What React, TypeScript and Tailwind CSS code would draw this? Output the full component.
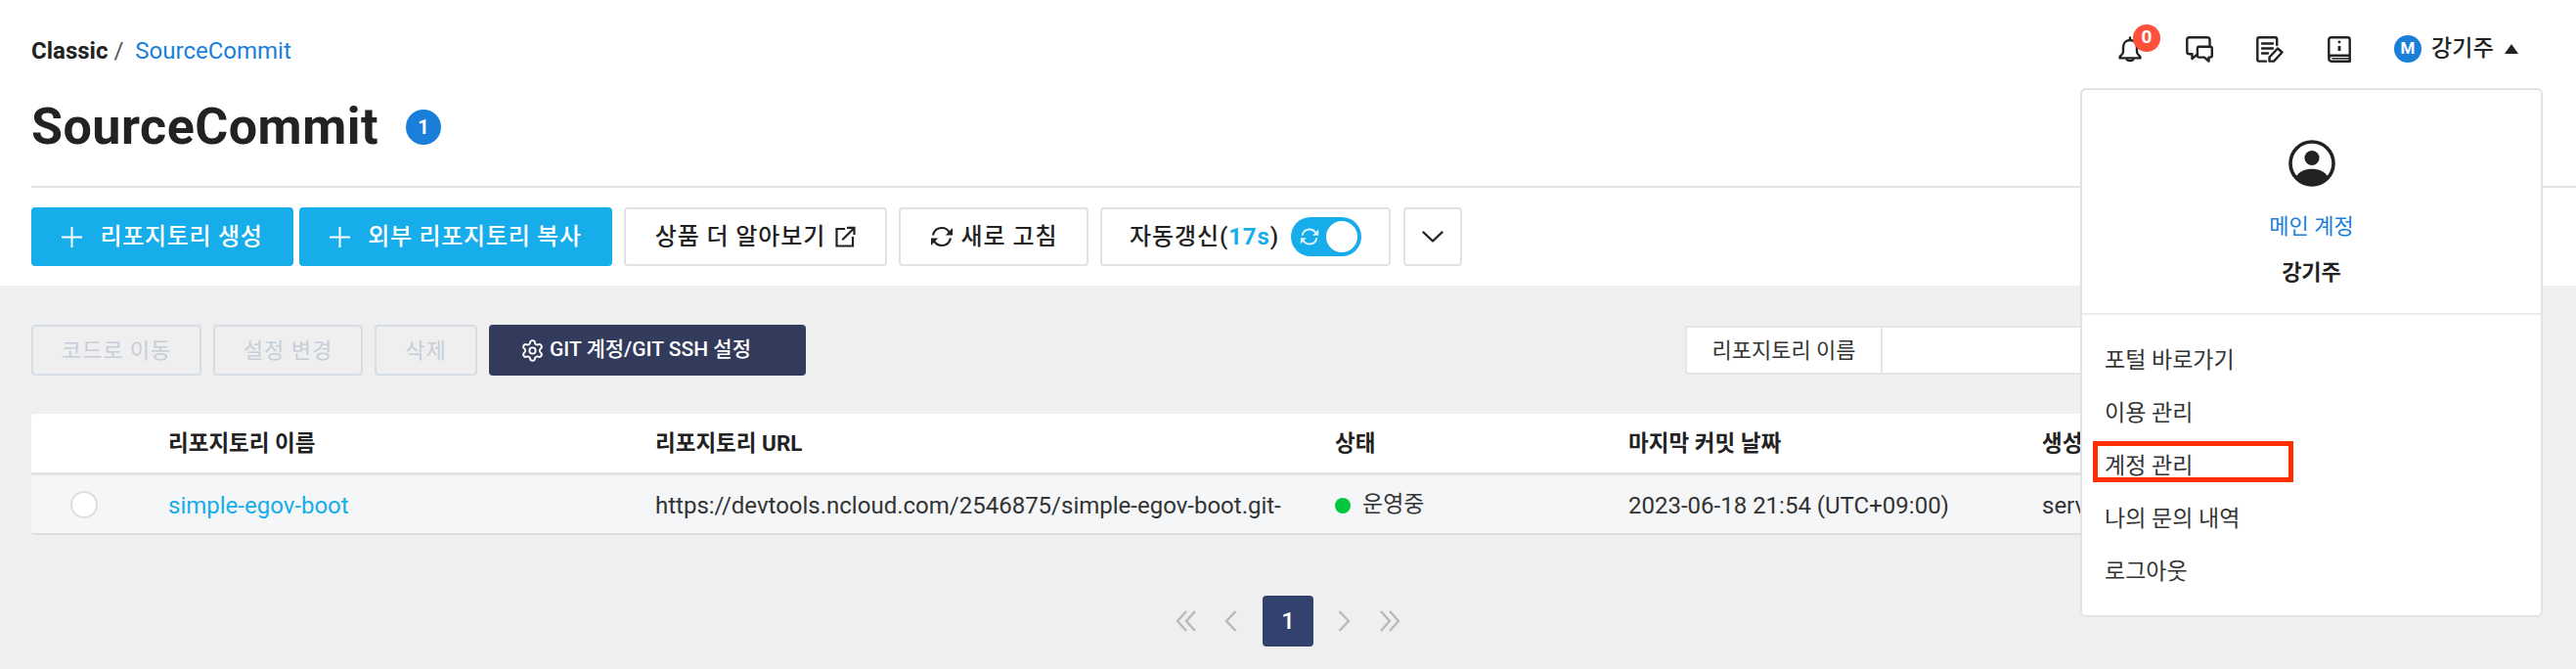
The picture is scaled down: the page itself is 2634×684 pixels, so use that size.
import React from "react";
import { Settings } from "lucide-react";

const Bell = () => (
  <svg width="24" height="27" viewBox="0 0 24 27" fill="none" stroke="#222" strokeWidth="2.4" strokeLinejoin="round" strokeLinecap="round">
    <path d="M12 4C7.5 4 5 7.5 5 11.5V16C5 18.5 3 19.5 1.6 21V22.4H22.4V21C21 19.5 19 18.5 19 16V11.5C19 7.5 16.5 4 12 4Z" />
    <path d="M12 1.5V4" />
    <path d="M8.5 23.5C9 25.5 15 25.5 15.5 23.5" />
  </svg>
);
const Chat = () => (
  <svg width="28" height="27" viewBox="0 0 28 27" fill="none" stroke="#222" strokeWidth="2.4" strokeLinejoin="round" strokeLinecap="round">
    <path d="M24.5 10V3.5C24.5 2 23.5 1.3 22 1.3H4C2.5 1.3 1.3 2 1.3 3.5V16C1.3 17.5 2.5 18.3 4 18.3H6.5V23L12 18.3" />
    <path d="M13.5 10.8H25C26 10.8 26.8 11.5 26.8 12.5V20C26.8 21 26 21.6 25 21.6H23.5V25.5L19 21.6H13.5C12.5 21.6 11.9 21 11.9 20V12.5C11.9 11.5 12.5 10.8 13.5 10.8Z" />
  </svg>
);
const Note = () => (
  <svg width="28" height="27" viewBox="0 0 28 27" fill="none" stroke="#222" strokeWidth="2.4" strokeLinejoin="round" strokeLinecap="round">
    <path d="M10 25.6H3C1.9 25.6 1.3 25 1.3 24V3C1.3 2 1.9 1.3 3 1.3H19.5C20.6 1.3 21.2 2 21.2 3V9" />
    <path d="M6 7.5H17M6 12.5H17M6 17.5H12" />
    <path d="M13.5 21.5L22 12.5L26.5 16.5L18 25.6L13.5 25.6Z" />
  </svg>
);
const Book = () => (
  <svg width="24" height="27" viewBox="0 0 24 27" fill="none" stroke="#222" strokeWidth="2.4" strokeLinejoin="round" strokeLinecap="round">
    <path d="M1.3 21.5V3.5C1.3 2 2.3 1.3 3.5 1.3H20.5C21.7 1.3 22.7 2 22.7 3.5V25.7H4C2.3 25.7 1.3 24.5 1.3 23C1.3 21 2.3 19.7 4 19.7H22.7" />
    <circle cx="12" cy="6" r="1.4" fill="#222" stroke="none" />
    <path d="M12 10V15" strokeWidth="2.8" strokeLinecap="butt" />
    <path d="M5 22.7H22" strokeWidth="1.6" />
  </svg>
);
const UserIcon = () => (
  <svg width="48" height="48" viewBox="0 0 48 48" fill="none">
    <circle cx="24" cy="24" r="22" stroke="#222" strokeWidth="3.6" />
    <circle cx="24" cy="18.5" r="7.6" fill="#222" />
    <path d="M7.5 38C11 32 17 29.7 24 29.7C31 29.7 37 32 40.5 38A22 22 0 0 1 7.5 38Z" fill="#222" />
  </svg>
);
const Refresh = ({ color, size }: { color: string; size: number }) => (
  <svg width={size} height={size} viewBox="0 0 24 24" fill="none" stroke={color} strokeWidth="2.2">
    <path d="M3 10.5C4 6 7.5 3 12 3C15.5 3 18.5 5 20 8" />
    <path d="M21 13.5C20 18 16.5 21 12 21C8.5 21 5.5 19 4 16" />
    <path d="M23 3V10.5H15.8Z" fill={color} stroke="none" />
    <path d="M1 21V13.5H8.2Z" fill={color} stroke="none" />
  </svg>
);
const External = () => (
  <svg width="21" height="22" viewBox="0 0 21 22" fill="none" stroke="#222" strokeWidth="2.2" strokeLinecap="square">
    <path d="M9 3H1.5V20.5H18V12" />
    <path d="M8 13.5L19 2.5M13 1.8H19.5V8" />
  </svg>
);
const Down = () => (
  <svg width="22" height="12" viewBox="0 0 22 12" fill="none" stroke="#222" strokeWidth="2.4" strokeLinecap="round" strokeLinejoin="round">
    <path d="M1.5 1.5L11 10.5L20.5 1.5" />
  </svg>
);
const PlusIcon = () => (
  <svg width="21" height="21" viewBox="0 0 21 21" fill="none" stroke="#fff" strokeWidth="2">
    <path d="M10.5 0V21M0 10.5H21" />
  </svg>
);
const Pager = ({ d, w }: { d: string; w: number }) => (
  <svg width={w} height="22" viewBox={`0 0 ${w} 22`} fill="none" stroke="#b9b9b9" strokeWidth="2.4">
    <path d={d} />
  </svg>
);

const BlueBtn = ({ w, label }: { w: string; label: string }) => (
  <button className={`${w} h-[60px] rounded bg-[#17adeb] text-white flex items-center justify-center gap-[18px] text-[24px] font-medium tracking-[0.7px]`}>
    <PlusIcon />
    <span>{label}</span>
  </button>
);

const outline = "h-[60px] rounded border-2 border-[#e2e2e2] bg-white flex items-center justify-center text-[#222] text-[24px] font-medium tracking-[0.9px]";
const ghost = "h-[52px] rounded border-2 border-[#d6dde5] flex items-center justify-center text-[#c5ced9] text-[22px] tracking-[1px]";
const th = "flex items-center pt-[2px] text-[22.5px] font-bold text-[#222]";
const td = "flex items-center pt-[2px] text-[24px] text-[#333]";

export default function App() {
  return (
    <div className="relative w-[2634px] h-[684px] overflow-hidden bg-[#efefef] text-[#222] font-['Roboto','Noto_Sans_CJK_KR',sans-serif]">
      <header className="h-[292px] bg-white pl-8 flex flex-col">
        <div className="h-[100px] flex items-center justify-between pr-[59px]">
          <div className="flex items-center pt-1 text-[24px]">
            <span className="font-bold">Classic</span>
            <span className="ml-[6px] text-[#555]">/</span>
            <span className="ml-[12px] text-[#1a7fd9]">SourceCommit</span>
          </div>
          <div className="flex items-center">
            <span className="relative flex mr-[45px]">
              <Bell />
              <span className="absolute -top-3 left-[15px] w-7 h-7 rounded-full bg-[#ff503c] text-white text-[19px] font-bold flex items-center justify-center">0</span>
            </span>
            <span className="flex mr-[44px]"><Chat /></span>
            <span className="flex mr-[45px]"><Note /></span>
            <span className="flex mr-[44px]"><Book /></span>
            <span className="w-7 h-7 rounded-full bg-[#1a7fd9] text-white text-[17px] font-bold flex items-center justify-center">M</span>
            <span className="ml-[10px] text-[23px] font-medium tracking-[0.2px]">강기주</span>
            <span className="ml-[11px] w-0 h-0 border-l-[7px] border-r-[7px] border-b-[10px] border-l-transparent border-r-transparent border-b-[#222]" />
          </div>
        </div>
        <div className="h-[60px] flex items-center">
          <h1 className="text-[52px] font-bold tracking-[0.5px] text-[#222]">SourceCommit</h1>
          <span className="ml-[28px] w-9 h-9 rounded-full bg-[#1a7edb] text-white text-[20px] font-bold flex items-center justify-center">1</span>
        </div>
        <div className="mt-[30px] h-[2px] bg-[#e2e2e2]" />
        <div className="mt-5 flex items-center">
          <BlueBtn w="w-[268px]" label="리포지토리 생성" />
          <div className="ml-[6px]"><BlueBtn w="w-[320px]" label="외부 리포지토리 복사" /></div>
          <button className={`${outline} ml-3 w-[269px] gap-[10px]`}>상품 더 알아보기 <External /></button>
          <button className={`${outline} ml-3 w-[194px] gap-2`}><Refresh color="#222" size={24} />새로 고침</button>
          <button className={`${outline} ml-3 w-[297px] tracking-[0.6px]`}>
            <span>자동갱신(<span className="text-[#17adeb] font-bold">17s</span>)</span>
            <span className="ml-[12px] w-[72px] shrink-0 h-10 rounded-full bg-[#17adeb] flex items-center justify-between pl-[9px] pr-[4px]">
              <Refresh color="#dff4fd" size={20} />
              <span className="w-8 h-8 rounded-full bg-white" />
            </span>
          </button>
          <button className={`${outline} ml-[13px] w-[60px]`}><Down /></button>
        </div>
      </header>

      <main className="pl-8">
        <div className="w-[2468px] pt-10 flex items-center">
          <button className={`${ghost} w-[174px]`}>코드로 이동</button>
          <button className={`${ghost} w-[153px] ml-3`}>설정 변경</button>
          <button className={`${ghost} w-[105px] ml-3`}>삭제</button>
          <button className="ml-3 w-[324px] h-[52px] pr-[24px] rounded bg-[#323b5c] text-white text-[21px] font-medium flex items-center justify-center gap-[5px]">
            <Settings size={25} strokeWidth={1.8} />GIT 계정/GIT SSH 설정
          </button>
          <div className="ml-auto w-[777px] h-[50px] flex bg-white border-2 border-[#e6e6e6] rounded">
            <div className="w-[200px] border-r-2 border-[#e6e6e6] flex items-center justify-center text-[22px] text-[#333]">리포지토리 이름</div>
          </div>
        </div>

        <div className="mt-[39px] w-[2468px] rounded bg-white border-b-2 border-[#dcdcdc] overflow-hidden">
          <div className="h-[63px] grid grid-cols-[140px_498px_695px_300px_423px_1fr] border-b-[3px] border-[#e2e2e2]">
            <div />
            <div className={th}>리포지토리 이름</div>
            <div className={th}>리포지토리 URL</div>
            <div className={th}>상태</div>
            <div className={th}>마지막 커밋 날짜</div>
            <div className={th}>생성자</div>
          </div>
          <div className="h-[59px] bg-[#f5f6f8] grid grid-cols-[140px_498px_695px_300px_423px_1fr]">
            <div className="flex items-center pl-[40px]">
              <span className="w-7 h-7 rounded-full bg-white border-2 border-[#dedede]" />
            </div>
            <div className={`${td} !text-[#17adeb]`}>simple-egov-boot</div>
            <div className={td}>https://devtools.ncloud.com/2546875/simple-egov-boot.git-</div>
            <div className={td}><span className="w-4 h-4 rounded-full bg-[#00c73c] mr-3" /><span className="text-[23px]">운영중</span></div>
            <div className={td}>2023-06-18 21:54 (UTC+09:00)</div>
            <div className={td}>service</div>
          </div>
        </div>
      </main>

      <nav className="mt-[62px] flex items-center justify-center">
        <Pager w={22} d="M11 1L2 11L11 21M20 1L11 11L20 21" />
        <span className="ml-[28px] flex"><Pager w={13} d="M11.5 1L2 11L11.5 21" /></span>
        <span className="ml-[26px] w-[52px] h-[52px] rounded bg-[#33416f] text-white text-[24px] font-medium flex items-center justify-center">1</span>
        <span className="ml-[25px] flex"><Pager w={13} d="M1.5 1L11 11L1.5 21" /></span>
        <span className="ml-[29px] flex"><Pager w={22} d="M2 1L11 11L2 21M11 1L20 11L11 21" /></span>
      </nav>

      <div className="absolute left-[2127px] top-[90px] w-[473px] h-[541px] rounded-md bg-white border-2 border-[#e3e3e3]">
        <div className="h-[230px] border-b-2 border-[#ececec] flex flex-col items-center pt-[51px]">
          <UserIcon />
          <div className="mt-[26px] text-[22px] leading-[30px] text-[#1a7fd9]">메인 계정</div>
          <div className="mt-[17px] text-[22px] leading-[30px] font-bold text-[#222]">강기주</div>
        </div>
        <ul className="pt-[20px] pl-[23px] text-[23px] text-[#333]">
          <li className="h-[54px] flex items-center">포털 바로가기</li>
          <li className="h-[54px] flex items-center">이용 관리</li>
          <li className="relative h-[54px] flex items-center">계정 관리
            <span className="absolute -left-[12px] top-[1px] w-[205px] h-[42px] border-[5px] border-[#ff2d00]" />
          </li>
          <li className="h-[54px] flex items-center">나의 문의 내역</li>
          <li className="h-[54px] flex items-center">로그아웃</li>
        </ul>
      </div>
    </div>
  );
}
